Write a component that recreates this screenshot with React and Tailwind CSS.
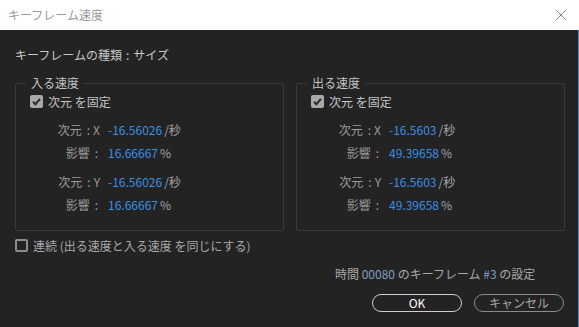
import React from 'react';

const font = { fontFamily: '"Noto Sans CJK JP", "Noto Sans", sans-serif' };

const CheckedBox = () => (
  <span className="flex h-[13px] w-[13px] items-center justify-center rounded-[2px] bg-[#a9a9a9]">
    <svg width="11" height="11" viewBox="0 0 11 11">
      <path d="M2 5.8 L4.4 8.2 L9 2.8" fill="none" stroke="#2a2a2a" strokeWidth="2" />
    </svg>
  </span>
);

const SpeedRow = ({ name, axis, value, unit }) => (
  <div className="flex h-[23px] items-center">
    <span className="flex w-[70px] justify-end text-[#9c9c9c]">
      <span>{name}</span>
      <span className={axis ? 'ml-[5px]' : 'ml-[5px] mr-[2px]'}>:</span>
      {axis && <span className="ml-[3px]">{axis}</span>}
    </span>
    <span className="ml-[8px] text-[#3b8fe4]">{value}</span>
    <span className="ml-[2px] text-[#a4a4a4]">{unit}</span>
  </div>
);

const SpeedGroup = ({ title, speed, influence }) => (
  <fieldset className="h-[154px] flex-1 rounded-[2px] border border-[#3a3a3a] px-[14px]">
    <legend className="ml-[-4px] px-[5px] text-[#c4c4c4]">{title}</legend>
    <div className="mt-[6px] flex items-center gap-[5px]">
      <CheckedBox />
      <span className="text-[#c4c4c4]">次元 を固定</span>
    </div>
    <div className="mt-[10px]">
      <SpeedRow name="次元" axis="X" value={speed} unit="/秒" />
      <SpeedRow name="影響" value={influence} unit="%" />
    </div>
    <div className="mt-[6px]">
      <SpeedRow name="次元" axis="Y" value={speed} unit="/秒" />
      <SpeedRow name="影響" value={influence} unit="%" />
    </div>
  </fieldset>
);

export default function App() {
  return (
    <div className="flex h-[327px] w-[579px] flex-col text-[12px] leading-none" style={font}>
      <div className="flex h-[30px] items-center justify-between bg-white pl-[8px] pr-[12px]">
        <span className="text-[#9a9a9a]">キーフレーム速度</span>
        <svg width="12" height="12" viewBox="0 0 12 12">
          <path d="M1 1 L11 11 M11 1 L1 11" stroke="#8a8a8a" strokeWidth="1" />
        </svg>
      </div>
      <div className="flex flex-1 flex-col border-r border-[#5f82c8] bg-[#232323] pl-[15px] pr-[13px]">
        <div className="mt-[19px] flex text-[#c8c8c8]">
          <span>キーフレームの種類</span>
          <span className="mx-[4px]">:</span>
          <span>サイズ</span>
        </div>
        <div className="mt-[16px] flex gap-[12px]">
          <SpeedGroup title="入る速度" speed="-16.56026" influence="16.66667" />
          <SpeedGroup title="出る速度" speed="-16.5603" influence="49.39658" />
        </div>
        <div className="mt-[8px] flex items-center gap-[5px]">
          <span className="h-[13px] w-[13px] rounded-[2px] border-2 border-[#8c8c8c]" />
          <span className="text-[#a8a8a8]">連続 (出る速度と入る速度 を同じにする)</span>
        </div>
        <div className="mt-[16px] pl-[320px] text-[#a8a8a8]">
          時間 <span className="text-[#7f9fc6]">00080</span> のキーフレーム <span className="text-[#7f9fc6]">#3</span> の設定
        </div>
        <div className="mt-[14px] flex justify-end gap-[12px] pr-[1px]">
          <button className="h-[18px] w-[90px] rounded-full border-[1.5px] border-[#cfcfcf] text-white">OK</button>
          <button className="h-[18px] w-[90px] rounded-full border-[1.5px] border-[#8a8a8a] text-[#a8a8a8]">キャンセル</button>
        </div>
      </div>
    </div>
  );
}
